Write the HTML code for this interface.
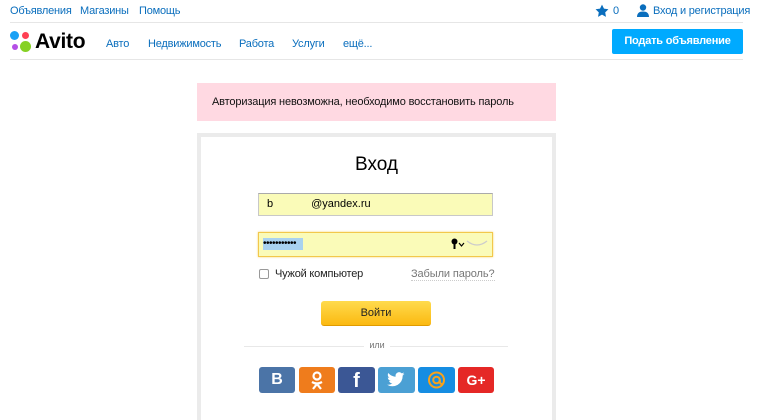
<!DOCTYPE html>
<html><head><meta charset="utf-8"><style>
*{margin:0;padding:0;box-sizing:border-box}
html,body{width:760px;height:420px;overflow:hidden}
body{background:#fff;font-family:"Liberation Sans",Arial,sans-serif;position:relative;color:#000}
.a{position:absolute;white-space:nowrap}
.lnk{color:#0a6ebd;font-size:11px;letter-spacing:-0.2px}
</style></head><body>
<div class="a lnk" style="left:10px;top:5px">Объявления</div>
<div class="a lnk" style="left:80px;top:5px">Магазины</div>
<div class="a lnk" style="left:139px;top:5px">Помощь</div>
<svg class="a" style="left:595px;top:4px" width="14" height="14" viewBox="0 0 24 24"><path fill="#0a6ebd" d="M12 1l3.4 7 7.6 1-5.5 5.3 1.3 7.7L12 18.3 5.2 22l1.3-7.7L1 9l7.6-1z"/></svg>
<div class="a lnk" style="left:613px;top:5px">0</div>
<svg class="a" style="left:637px;top:4px" width="12" height="13" viewBox="0 0 12 13"><circle cx="6" cy="3.5" r="3.2" fill="#0a6ebd"/><path d="M0 13c0-4 2.5-5.5 6-5.5s6 1.5 6 5.5z" fill="#0a6ebd"/></svg>
<div class="a lnk" style="left:653px;top:5px">Вход и регистрация</div>
<div class="a" style="left:10px;top:22px;width:733px;height:1px;background:#e6e6e6"></div>
<div class="a" style="left:10px;top:31px;width:9px;height:9px;border-radius:50%;background:#1aa1f5"></div>
<div class="a" style="left:22px;top:32px;width:7px;height:7px;border-radius:50%;background:#ff4053"></div>
<div class="a" style="left:12px;top:44px;width:6px;height:6px;border-radius:50%;background:#b44fe6"></div>
<div class="a" style="left:20px;top:41px;width:11px;height:11px;border-radius:50%;background:#85d124"></div>
<div class="a" style="left:35px;top:30px;font-size:21px;font-weight:bold;color:#000;letter-spacing:-0.3px">Avito</div>
<div class="a lnk" style="left:106px;top:38px">Авто</div>
<div class="a lnk" style="left:148px;top:38px">Недвижимость</div>
<div class="a lnk" style="left:239px;top:38px">Работа</div>
<div class="a lnk" style="left:292px;top:38px">Услуги</div>
<div class="a lnk" style="left:343px;top:38px">ещё...</div>
<div class="a" style="left:612px;top:29px;width:131px;height:25px;background:#00aaff;color:#fff;font-size:11px;font-weight:bold;text-align:center;line-height:25px;border-radius:2px;letter-spacing:-0.2px">Подать объявление</div>
<div class="a" style="left:10px;top:59px;width:733px;height:1px;background:#e6e6e6"></div>
<div class="a" style="left:197px;top:83px;width:359px;height:38px;background:#ffd9e2;font-size:11px;letter-spacing:-0.15px;line-height:38px;padding-left:15px;color:#111">Авторизация невозможна, необходимо восстановить пароль</div>
<div class="a" style="left:197px;top:133px;width:359px;height:300px;border:4px solid #ebebeb;background:#fff"></div>
<div class="a" style="left:197px;top:154px;width:359px;text-align:center;font-size:19px;color:#000">Вход</div>
<div class="a" style="left:258px;top:193px;width:235px;height:23px;background:#fafbb8;border:1px solid #c8c8c8;border-top-color:#aaa;font-size:11px;line-height:21px;padding-left:8px">b<span style="margin-left:38px">@yandex.ru</span></div>
<div class="a" style="left:258px;top:232px;width:235px;height:25px;background:#fafbb8;border:1px solid #f2c84b;box-shadow:0 0 2px #f7d36b"></div>
<div class="a" style="left:263px;top:238px;width:40px;height:12px;background:#a9d2f0;font-size:10px;line-height:11px;letter-spacing:-0.5px;color:#000">•••••••••••</div>
<svg class="a" style="left:451px;top:238px" width="14" height="11"><circle cx="3.5" cy="3.5" r="3" fill="#000"/><rect x="2.5" y="5" width="2" height="6" fill="#000"/><path d="M8 5l2.5 3 2.5-3" stroke="#000" fill="none" stroke-width="1.2"/></svg>
<svg class="a" style="left:466px;top:240px" width="22" height="8"><path d="M1 1Q11 9 21 1" stroke="#ccc" fill="none" stroke-width="1.2"/></svg>
<div class="a" style="left:259px;top:269px;width:10px;height:10px;border:1px solid #999;border-radius:2px;background:#fff"></div>
<div class="a" style="left:275px;top:268px;font-size:11px;letter-spacing:-0.2px;color:#222">Чужой компьютер</div>
<div class="a" style="left:411px;top:268px;font-size:11px;letter-spacing:-0.1px;color:#777;border-bottom:1px dotted #ccc">Забыли пароль?</div>
<div class="a" style="left:321px;top:301px;width:110px;height:25px;background:linear-gradient(#ffdb4d,#fbb911);border-radius:3px;border-bottom:1px solid #e09b00;font-size:11px;text-align:center;line-height:24px;color:#222">Войти</div>
<div class="a" style="left:244px;top:346px;width:120px;height:1px;background:#e8e8e8"></div>
<div class="a" style="left:390px;top:346px;width:118px;height:1px;background:#e8e8e8"></div>
<div class="a" style="left:364px;top:340px;width:26px;text-align:center;font-size:9px;color:#777">или</div>
<div class="a" style="left:259px;top:367px;width:36px;height:26px;background:#4b74a7;border-radius:3px;color:#fff;font-weight:bold;font-size:16px;text-align:center;line-height:26px">B</div>
<div class="a" style="left:299px;top:367px;width:36px;height:26px;background:#ef7c1c;border-radius:3px"><svg width="36" height="26"><circle cx="18" cy="9" r="3.5" stroke="#fff" stroke-width="2.2" fill="none"/><path d="M13 15q5 3 10 0M18 17l-4 5M18 17l4 5" stroke="#fff" stroke-width="2.2" fill="none"/></svg></div>
<div class="a" style="left:338px;top:367px;width:37px;height:26px;background:#3b5795;border-radius:3px;color:#fff;font-weight:bold;font-size:20px;text-align:center;line-height:28px">f</div>
<div class="a" style="left:378px;top:367px;width:37px;height:26px;background:#4ba0d4;border-radius:3px"><svg width="37" height="26" viewBox="-11 -5 48 36"><path fill="#fff" d="M24 4.6c-.9.4-1.8.6-2.8.8 1-.6 1.8-1.6 2.2-2.7-1 .6-2 1-3.1 1.2a4.9 4.9 0 0 0-8.4 4.5C7.8 8.2 4.1 6.3 1.7 3.3.3 5.6 1 8.6 3.2 10c-.8 0-1.6-.2-2.2-.6 0 2.4 1.7 4.4 3.9 4.8-.7.2-1.5.2-2.2.1.6 2 2.4 3.4 4.6 3.4A9.9 9.9 0 0 1 0 19.5 14 14 0 0 0 21.5 7c1-.7 1.8-1.5 2.5-2.4z"/></svg></div>
<div class="a" style="left:418px;top:367px;width:37px;height:26px;background:#168de2;border-radius:3px"><svg width="37" height="26"><circle cx="18.5" cy="13" r="7.5" stroke="#f7a21c" stroke-width="2" fill="none"/><circle cx="18.5" cy="13" r="3.3" stroke="#f7a21c" stroke-width="2" fill="none"/><path d="M21.8 13v1.5q0 2.5 2.2 2.5" stroke="#f7a21c" stroke-width="2" fill="none"/></svg></div>
<div class="a" style="left:458px;top:367px;width:36px;height:26px;background:#e52826;border-radius:3px;color:#fff;font-weight:bold;font-size:14px;text-align:center;line-height:26px">G+</div>
</body></html>
